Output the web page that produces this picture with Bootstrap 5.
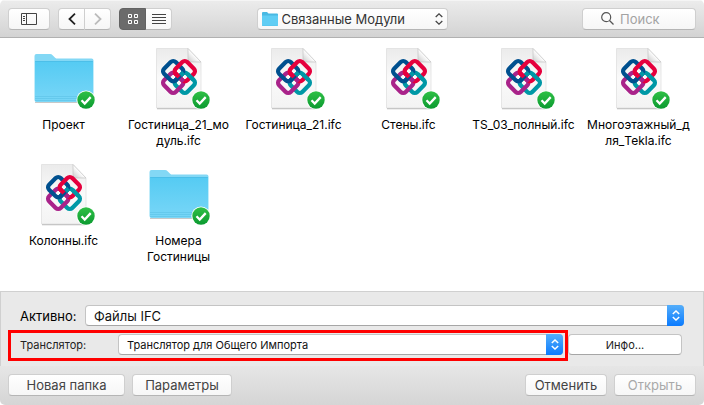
<!DOCTYPE html>
<html lang="ru">
<head>
<meta charset="utf-8">
<meta name="viewport" content="width=device-width, initial-scale=1">
<title>Связанные Модули</title>
<link href="https://cdn.jsdelivr.net/npm/bootstrap@5.3.0/dist/css/bootstrap.min.css" rel="stylesheet">
<style>
body { font-family: Inter, Roboto, "Liberation Sans", sans-serif; font-size: 13px; line-height: 16px; color: #000; background: #fff; }
svg { display: block; }
.dialog { border-radius: 5px; overflow: hidden; }
.toolbar { height: 38px; padding: 0 8px; background: linear-gradient(#ececec, #d3d3d3); border-bottom: 1px solid #b1b1b1; box-shadow: inset 0 1px #f5f5f5; }
.tool-side { flex: 1 1 0; }
.mac-btn { height: 22px; padding: 0; border: 1px solid #cfcfcf; border-bottom-color: #b5b5b5; border-radius: 4px; background: linear-gradient(#fff, #f6f6f6); color: #444; font-size: 13px; line-height: 16px; display: flex; align-items: center; justify-content: center; }
.mac-btn:disabled { opacity: 1; color: #a9a9a9; border-color: #cfcfcf; border-bottom-color: #b5b5b5; background: linear-gradient(#fff, #f6f6f6); }
.btn-side { width: 42px; }
.btn-nav { width: 27px; }
.btn-nav.border-start-0 { width: 26px; }
.mac-btn.is-on { background: #6b6b6b; border-color: #636363; color: #fff; }
.place { width: 191px; }
.place-select { appearance: none; border: 0; background: transparent; color: #333; font-size: 13px; line-height: 16px; padding: 0; outline: 0; }
.search { width: 114px; padding-left: 18px; gap: 6px; justify-content: flex-start; }
.search input { width: 70px; border: 0; outline: 0; padding: 0; background: transparent; font-size: 13px; line-height: 16px; }
.search input::placeholder { color: #a3a3a3; opacity: 1; }
.files { padding: 8px 8px 0 6px; }
.tile { height: 116px; font-size: 12px; line-height: 16px; text-align: center; white-space: nowrap; }
.tile-name { margin-top: 7px; }
.options { background: #e9e9e9; border: 1px solid #d0d0d0; border-bottom: 0; padding: 13px 21px 5px 7px; }
.active-row { padding: 0 0 4px 12px; margin-right: -2px; }
.active-row label { width: 65px; }
.pop { position: relative; height: 21px; }
.pop select { width: 100%; height: 21px; border: 1px solid #c4c4c4; border-bottom-color: #a6a6a6; border-radius: 4px; background: #fff; appearance: none; padding: 0 20px 0 8px; color: #111; outline: 0; }
.pop-arrow { position: absolute; top: 0; right: 0; width: 17px; height: 21px; border-radius: 0 4px 4px 0; background: linear-gradient(#55aefa, #0a7bff); pointer-events: none; display: flex; align-items: center; justify-content: center; }
.marked { border: 3px solid #f00; padding: 1px 2px 3px 9px; font-size: 11px; }
.marked label { width: 98px; color: #222; }
.info-btn { width: 114px; height: 21px; font-size: 11px; background: #fff; color: #222; margin-top: 4px; border-color: #c4c4c4; border-bottom-color: #a6a6a6; }
.actions { height: 39px; padding: 8px; gap: 7px; background: linear-gradient(#e6e6e6, #d5d5d5); }
.w-new { width: 117px; } .w-par { width: 100px; } .w-act { width: 82px; }
</style>
<script src="https://cdn.jsdelivr.net/npm/bootstrap@5.3.0/dist/js/bootstrap.bundle.min.js"></script>
</head>
<body>
<svg width="0" height="0" class="position-absolute" aria-hidden="true">
  <defs>
    <linearGradient id="gFolder" x1="0" y1="0" x2="0" y2="1"><stop offset="0" stop-color="#55cbf3"/><stop offset="1" stop-color="#78d6f7"/></linearGradient>
    <linearGradient id="gDoc" x1="0" y1="0" x2="0" y2="1"><stop offset="0" stop-color="#ebebeb"/><stop offset=".5" stop-color="#fafafa"/><stop offset="1" stop-color="#f3f3f3"/></linearGradient>
    <linearGradient id="gFold" x1="0" y1="1" x2="1" y2="0"><stop offset="0" stop-color="#c8c8c8"/><stop offset=".5" stop-color="#fff"/></linearGradient>
    <linearGradient id="gOk" x1="0" y1="0" x2="0" y2="1"><stop offset="0" stop-color="#2fc046"/><stop offset="1" stop-color="#0b9a30"/></linearGradient>
    <symbol id="ok" viewBox="0 0 64 64">
      <circle cx="54" cy="54" r="9.6" fill="#fff"/><circle cx="54" cy="54" r="8.700" fill="url(#gOk)"/>
      <path d="M49.500 54.300l3.200 3.200 6-6.400" fill="none" stroke="#fff" stroke-width="2.300"/>
    </symbol>
    <symbol id="folder" viewBox="0 0 64 64">
      <path d="M3 56.500h58" stroke="#c8c8c8"/>
      <path d="M2.500 54V10q0-2 2-2H18q1.600 0 2.600 1.300l2.500 2.400q1 .9 2.500.9H59.500q2 0 2 2V54q0 2-2 2h-55q-2 0-2-2z" fill="#83d8f5"/>
      <path d="M3 16.500q0-1.200 1.500-1.200h55q1.500 0 1.500 1.200V54q0 1.500-1.500 1.500h-55Q3 55.500 3 54z" fill="url(#gFolder)"/>
      <path d="M3 15.500h58" stroke="#43b9e4" stroke-width=".7"/>
      <path d="M3 50.500h58M3 52.500h58M3 54.500h58" stroke="#5fc4e8" stroke-width=".7"/>
      <use href="#ok"/>
    </symbol>
    <symbol id="ifc" viewBox="0 0 64 64">
      <path d="M10 62.700h43" stroke="#bbb" stroke-width="1.200"/>
      <path d="M9.500 2.500H41L54 16V62H9.500z" fill="url(#gDoc)" stroke="#dcdcdc" stroke-width=".7"/>
      <path d="M41 2.500V13q0 3 3 3H54z" fill="url(#gFold)" stroke="#c4c4c4" stroke-width=".7"/>
      <g transform="translate(32 31) rotate(45)" fill="none" stroke-width="4.200">
        <rect x="0" y="-8.200" width="16.400" height="16.400" rx="3.500" stroke="#0098a6"/>
        <rect x="-8.200" y="0" width="16.400" height="16.400" rx="3.500" stroke="#a9238a"/>
        <rect x="-16.400" y="-8.200" width="16.400" height="16.400" rx="3.500" stroke="#00508f"/>
        <rect x="-8.200" y="-16.400" width="16.400" height="16.400" rx="3.500" stroke="#e5003d"/>
        <path d="M4-8.200h8.500M0-6.500V0" stroke="#0098a6"/>
        <path d="M6.500 0H0" stroke="#a9238a"/>
        <path d="M0 6.500V-2" stroke="#00508f"/>
        <path d="M-6.500 0H0" stroke="#e5003d"/>
      </g>
      <path d="M49.500 47h1.500" stroke="#999" stroke-width=".7"/>
      <use href="#ok"/>
    </symbol>
  </defs>
</svg>

<div class="dialog d-flex flex-column min-vh-100">
  <header class="toolbar d-flex align-items-center flex-shrink-0">
    <div class="tool-side d-flex gap-2">
      <button type="button" class="mac-btn btn-side" aria-label="Боковая панель">
        <svg width="16" height="12" fill="none" stroke="#444"><path d="M.5.500h15v11H.5zM5.500.500v11M2 3.500h2M2 5.500h2M2 7.500h2"/></svg>
      </button>
      <div class="d-flex">
        <button type="button" class="mac-btn btn-nav rounded-end-0" aria-label="Назад"><svg width="8" height="12" fill="none" stroke="#222" stroke-width="1.800"><path d="M7 .7L1.500 6 7 11.300"/></svg></button>
        <button type="button" class="mac-btn btn-nav rounded-start-0 border-start-0" disabled aria-label="Вперёд"><svg width="8" height="12" fill="none" stroke="#bbb" stroke-width="1.800"><path d="M1 .7L6.500 6 1 11.300"/></svg></button>
      </div>
      <div class="d-flex">
        <button type="button" class="mac-btn btn-nav is-on rounded-end-0" aria-label="Значки"><svg width="10" height="10" fill="none" stroke="#fff"><path d="M.5.500h3v3h-3zM6.500.500h3v3h-3zM.5 6.500h3v3h-3zM6.500 6.500h3v3h-3z"/></svg></button>
        <button type="button" class="mac-btn btn-nav rounded-start-0 border-start-0" aria-label="Список"><svg width="14" height="10" stroke="#444"><path d="M0 .5h14M0 3.500h14M0 6.500h14M0 9.500h14"/></svg></button>
      </div>
    </div>
    <div class="mac-btn place px-1">
      <svg class="me-1 flex-shrink-0" width="16" height="14"><path d="M0 1q0-1 1-1h4l1.500 1.500H15q1 0 1 1V13q0 1-1 1H1q-1 0-1-1z" fill="#49b9e3"/><path d="M0 3.500h16V13q0 .7-1 .7H1q-1 0-1-.7z" fill="#5fcdf4"/></svg>
      <select class="place-select flex-grow-1" aria-label="Папка"><option>Связанные Модули</option></select>
      <svg width="8" height="12" fill="none" stroke="#444" stroke-width="1.300"><path d="M.7 4L4 .9 7.300 4M.7 8L4 11.100 7.300 8"/></svg>
    </div>
    <div class="tool-side d-flex justify-content-end">
      <label class="mac-btn search">
        <svg class="flex-shrink-0" width="13" height="13" fill="none" stroke="#555" stroke-width="1.200"><circle cx="5.200" cy="5.200" r="4.500"/><path d="M8.500 8.500l4 4"/></svg>
        <input type="search" placeholder="Поиск" aria-label="Поиск">
      </label>
    </div>
  </header>

  <main class="files flex-grow-1">
    <div class="row row-cols-6 g-0">
      <div class="col tile"><svg class="mx-auto" width="64" height="64"><use href="#folder"/></svg><div class="tile-name">Проект</div></div>
      <div class="col tile"><svg class="mx-auto" width="64" height="64"><use href="#ifc"/></svg><div class="tile-name">Гостиница_21_мо<br>дуль.ifc</div></div>
      <div class="col tile"><svg class="mx-auto" width="64" height="64"><use href="#ifc"/></svg><div class="tile-name">Гостиница_21.ifc</div></div>
      <div class="col tile"><svg class="mx-auto" width="64" height="64"><use href="#ifc"/></svg><div class="tile-name">Стены.ifc</div></div>
      <div class="col tile"><svg class="mx-auto" width="64" height="64"><use href="#ifc"/></svg><div class="tile-name">TS_03_полный.ifc</div></div>
      <div class="col tile"><svg class="mx-auto" width="64" height="64"><use href="#ifc"/></svg><div class="tile-name">Многоэтажный_д<br>ля_Tekla.ifc</div></div>
      <div class="col tile"><svg class="mx-auto" width="64" height="64"><use href="#ifc"/></svg><div class="tile-name">Колонны.ifc</div></div>
      <div class="col tile"><svg class="mx-auto" width="64" height="64"><use href="#folder"/></svg><div class="tile-name">Номера<br>Гостиницы</div></div>
    </div>
  </main>

  <section class="options">
    <div class="active-row d-flex align-items-center">
      <label for="kind">Активно:</label>
      <div class="pop flex-grow-1">
        <select id="kind"><option>Файлы IFC</option></select>
        <span class="pop-arrow"><svg width="8" height="11" fill="none" stroke="#fff" stroke-width="1.500"><path d="M.8 4L4 1l3.200 3M.8 7L4 10l3.200-3"/></svg></span>
      </div>
    </div>
    <div class="d-flex align-items-start">
      <div class="marked d-flex align-items-center flex-grow-1">
        <label for="translator">Транслятор:</label>
        <div class="pop flex-grow-1">
          <select id="translator"><option>Транслятор для Общего Импорта</option></select>
          <span class="pop-arrow"><svg width="8" height="11" fill="none" stroke="#fff" stroke-width="1.500"><path d="M.8 4L4 1l3.200 3M.8 7L4 10l3.200-3"/></svg></span>
        </div>
      </div>
      <button type="button" class="mac-btn info-btn">Инфо...</button>
    </div>
  </section>

  <footer class="actions d-flex">
    <button type="button" class="mac-btn w-new">Новая папка</button>
    <button type="button" class="mac-btn w-par">Параметры</button>
    <button type="button" class="mac-btn w-act ms-auto">Отменить</button>
    <button type="button" class="mac-btn w-act" disabled>Открыть</button>
  </footer>
</div>
</body>
</html>
